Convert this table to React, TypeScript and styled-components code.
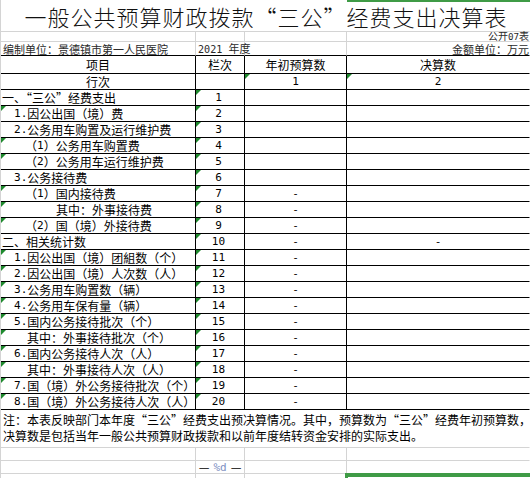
import React from 'react';
import styled, { createGlobalStyle, css } from 'styled-components';

const GlobalStyle = createGlobalStyle`
  html, body { margin: 0; padding: 0; background: #ffffff; }
  body { font-family: "Noto Sans CJK SC", "Noto Sans", sans-serif; overflow: hidden; }
`;

const GRID = '#d4d4d4';
const SEL = '#3f9b46';

type Line = 'ink' | 'grid' | 'none';
const lineColor = (l: Line) => (l === 'ink' ? '#000000' : l === 'grid' ? GRID : 'transparent');

const Sheet = styled.div`
  position: relative;
  width: 530px;
  height: 478px;
  overflow: hidden;
  box-sizing: border-box;
  border-left: 1px solid ${GRID};
  display: grid;
  grid-template-columns: 195px 49px 102px 183px;
  grid-template-rows: 32px 10px 14px 18px 16px repeat(20, 16px) 38px 13px 13px 20px;
  font-family: "Noto Sans CJK SC", "Noto Sans", sans-serif;
  font-size: 12px;
  color: #000;
`;

const Cell = styled.div<{ $r?: Line; $b?: Line; $tri?: boolean }>`
  position: relative;
  min-width: 0;
  box-sizing: border-box;
  display: flex;
  align-items: center;
  white-space: nowrap;
  line-height: 1;
  border-right: 1px solid ${(p) => lineColor(p.$r ?? 'grid')};
  border-bottom: 1px solid ${(p) => lineColor(p.$b ?? 'grid')};
  ${(p) =>
    p.$tri &&
    css`
      &::before {
        content: '';
        position: absolute;
        left: 0;
        top: 0;
        border-top: 5px solid #1f8a2e;
        border-right: 5px solid transparent;
      }
    `}
`;

const TitleCell = styled(Cell)`
  grid-column: 1 / -1;
  justify-content: center;
  font-size: 22px;
  font-weight: 300;
  letter-spacing: 1px;
  line-height: 24px;
  padding-left: 2px;
  color: #111;
`;

const InfoCell = styled(Cell)<{ $size: number; $align?: 'left' | 'right'; $lift?: number }>`
  font-size: ${(p) => p.$size}px;
  color: #2a2a2a;
  justify-content: ${(p) => (p.$align === 'right' ? 'flex-end' : 'flex-start')};
  padding-left: ${(p) => (p.$align === 'right' ? 0 : 2)}px;
  overflow: visible;
  & > span.t {
    position: relative;
    top: ${(p) => -(p.$lift ?? 0)}px;
  }
`;

const HeadCell = styled(Cell)`
  justify-content: center;
`;

const ItemCell = styled(Cell)<{ $pad: number }>`
  padding-left: ${(p) => p.$pad}px;
`;

const NoCell = styled(Cell)`
  justify-content: center;
  padding-right: 3px;
`;

const ValueCell = styled(Cell)`
  justify-content: center;
`;

const NoteCell = styled(Cell)`
  grid-column: 1 / -1;
  display: block;
  white-space: nowrap;
  line-height: 16px;
  padding: 2px 0 0 2px;
`;

const FooterCell = styled(Cell)`
  justify-content: center;
  font-size: 12px;
  color: #000;
`;

const Latin = styled.span`
  font-family: "DejaVu Sans Mono", "Liberation Mono", monospace;
  font-size: 0.92em;
`;

const Placeholder = styled.span`
  font-family: "DejaVu Sans Mono", "Liberation Mono", monospace;
  font-size: 11px;
  color: #7e8fbf;
  margin: 0 4px;
`;

const Selection = styled.div<{ $variant: 'top' | 'bottom' }>`
  position: absolute;
  pointer-events: none;
  ${(p) =>
    p.$variant === 'top'
      ? css`
          left: 346px;
          top: 0;
          width: 184px;
          height: 2px;
          background: ${SEL};
        `
      : css`
          left: 344px;
          top: 473px;
          width: 190px;
          height: 10px;
          border-top: 4px solid ${SEL};
          border-left: 3px solid ${SEL};
        `}
`;

const mix = (s: string) =>
  s.split(/([\x20-\x7e]+)/).map((part, i) =>
    /^[\x20-\x7e]+$/.test(part) ? <Latin key={i}>{part}</Latin> : <React.Fragment key={i}>{part}</React.Fragment>
  );

type Item = { label: string; pad: number; tri: boolean; c?: string; d?: string };

const items: Item[] = [
  { label: '一、“三公”经费支出', pad: 1, tri: false },
  { label: '1.因公出国（境）费', pad: 13, tri: true },
  { label: '2.公务用车购置及运行维护费', pad: 13, tri: false },
  { label: '（1）公务用车购置费', pad: 24, tri: true },
  { label: '（2）公务用车运行维护费', pad: 24, tri: true },
  { label: '3.公务接待费', pad: 13, tri: false },
  { label: '（1）国内接待费', pad: 24, tri: true, c: '-' },
  { label: '其中：外事接待费', pad: 55, tri: true, c: '-' },
  { label: '（2）国（境）外接待费', pad: 24, tri: true, c: '-' },
  { label: '二、相关统计数', pad: 1, tri: false, c: '-', d: '-' },
  { label: '1.因公出国（境）团組数（个）', pad: 13, tri: true, c: '-' },
  { label: '2.因公出国（境）人次数（人）', pad: 13, tri: true, c: '-' },
  { label: '3.公务用车购置数（辆）', pad: 13, tri: true, c: '-' },
  { label: '4.公务用车保有量（辆）', pad: 13, tri: true, c: '-' },
  { label: '5.国内公务接待批次（个）', pad: 13, tri: true, c: '-' },
  { label: '其中：外事接待批次（个）', pad: 26, tri: true, c: '-' },
  { label: '6.国内公务接待人次（人）', pad: 13, tri: true, c: '-' },
  { label: '其中：外事接待人次（人）', pad: 26, tri: true, c: '-' },
  { label: '7.国（境）外公务接待批次（个）', pad: 13, tri: true, c: '-' },
  { label: '8.国（境）外公务接待人次（人）', pad: 13, tri: true, c: '-' },
];

export default function App() {
  return (
    <>
      <GlobalStyle />
      <Sheet lang="zh-CN">
        <TitleCell $r="none">一般公共预算财政拨款“三公”经费支出决算表</TitleCell>

        <InfoCell $size={10} />
        <InfoCell $size={10} />
        <InfoCell $size={10} />
        <InfoCell $size={10} $align="right" $r="none" $lift={0}>
          <span className="t">{mix('公开07表')}</span>
        </InfoCell>

        <InfoCell $size={11} $b="ink" $lift={-1}>
          <span className="t">编制单位：景德镇市第一人民医院</span>
        </InfoCell>
        <InfoCell $size={11} $b="ink" $lift={-1}>
          <span className="t">{mix('2021 年度')}</span>
        </InfoCell>
        <InfoCell $size={11} $b="ink" />
        <InfoCell $size={11} $b="ink" $align="right" $r="none" $lift={-1}>
          <span className="t">金额单位：万元</span>
        </InfoCell>

        <HeadCell $r="ink" $b="ink">项目</HeadCell>
        <HeadCell $r="ink" $b="ink">栏次</HeadCell>
        <HeadCell $r="ink" $b="ink">年初预算数</HeadCell>
        <HeadCell $r="none" $b="ink">决算数</HeadCell>

        <HeadCell $r="ink" $b="ink">行次</HeadCell>
        <HeadCell $r="ink" $b="ink" />
        <ValueCell $r="ink" $b="ink" $tri>{mix('1')}</ValueCell>
        <ValueCell $r="none" $b="ink" $tri>{mix('2')}</ValueCell>

        {items.map((it, i) => (
          <React.Fragment key={i}>
            <ItemCell $r="ink" $b="ink" $pad={it.pad} $tri={it.tri}>
              {mix(it.label)}
            </ItemCell>
            <NoCell $r="ink" $b="ink" $tri>
              {mix(String(i + 1))}
            </NoCell>
            <ValueCell $r="ink" $b="ink">{it.c ? mix(it.c) : null}</ValueCell>
            <ValueCell $r="none" $b="ink">{it.d ? mix(it.d) : null}</ValueCell>
          </React.Fragment>
        ))}

        <NoteCell $r="none">
          注：本表反映部门本年度“三公”经费支出预决算情况。其中，预算数为“三公”经费年初预算数，
          <br />
          决算数是包括当年一般公共预算财政拨款和以前年度结转资金安排的实际支出。
        </NoteCell>

        <Cell />
        <Cell />
        <Cell />
        <Cell $r="none" />

        <Cell />
        <FooterCell>
          —<Placeholder>%d</Placeholder>—
        </FooterCell>
        <Cell />
        <Cell $r="none" />

        <Cell />
        <Cell />
        <Cell />
        <Cell $r="none" />

        <Selection $variant="top" />
        <Selection $variant="bottom" />
      </Sheet>
    </>
  );
}
